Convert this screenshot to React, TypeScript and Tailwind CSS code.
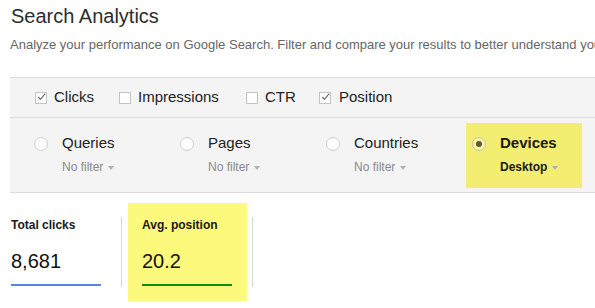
import React from "react";

function Check({ checked }: { checked: boolean }) {
  return (
    <span className="w-[12px] h-[12px] border border-[#c4c4c4] bg-white flex items-center justify-center shrink-0">
      {checked && (
        <svg width="11" height="10" viewBox="0 0 11 10" className="-mt-[1px] ml-[1px]">
          <polyline points="1.5,5 4.2,8 10,1" fill="none" stroke="#6a6a6a" strokeWidth="1.4" />
        </svg>
      )}
    </span>
  );
}

function Caret() {
  return <span className="ml-[5px] mt-[1px] w-0 h-0 border-l-[3.5px] border-r-[3.5px] border-t-[4px] border-l-transparent border-r-transparent border-t-[#b0b0b0]" />;
}

function Dimension({ label, filter, active }: { label: string; filter: string; active?: boolean }) {
  return (
    <div
      className={
        active
          ? "w-[116px] h-[65px] pl-[6px] pt-[11px] flex items-start bg-[#f3ed72]"
          : "w-[146px] h-[65px] pl-[6px] pt-[11px] flex items-start"
      }
    >
      <span
        className={
          active
            ? "mt-[3px] w-[14px] h-[14px] rounded-full border border-[#c9c48a] bg-[#f8f4b6] flex items-center justify-center shrink-0"
            : "mt-[3px] w-[14px] h-[14px] rounded-full border border-[#cfcfcf] bg-white shrink-0"
        }
      >
        {active && <span className="w-[6px] h-[6px] rounded-full bg-[#5e5b1c]" />}
      </span>
      <div className="ml-[14px]">
        <div className={active ? "text-[15px] leading-[18px] font-bold text-[#1a1a1a]" : "text-[15px] leading-[18px] text-[#222]"}>
          {label}
        </div>
        <div className="mt-[8px] flex items-center">
          <span className={active ? "text-[12px] leading-[14px] font-bold text-[#1a1a1a]" : "text-[12px] leading-[14px] text-[#8a8a8a]"}>
            {filter}
          </span>
          <Caret />
        </div>
      </div>
    </div>
  );
}

function Metric({ label, value, lineColor }: { label: string; value: string; lineColor: string }) {
  return (
    <div className="w-[90px] pt-[15px]">
      <div className="text-[12px] leading-[14px] font-bold text-[#1a1a1a] whitespace-nowrap">{label}</div>
      <div className="mt-[17px] text-[20px] leading-[24px] text-[#111]">{value}</div>
      <div className={`mt-[11px] h-[2px] ${lineColor}`} />
    </div>
  );
}

export default function App() {
  return (
    <div className="w-[595px] h-[308px] overflow-hidden bg-white font-['Liberation_Sans',Arial,sans-serif]">
      <div className="pl-[11px] pt-[4px] text-[20px] leading-[24px] text-[#2d2d2d]">Search Analytics</div>
      <div className="pl-[10px] mt-[9px] text-[13px] leading-[16px] text-[#666] whitespace-nowrap">
        Analyze your performance on Google Search. Filter and compare your results to better understand your search appearance.
      </div>

      <div className="ml-[10px] mt-[24px] bg-[#f4f4f4] border-t border-b border-[#dcdcdc]">
        <div className="h-[40px] border-b border-[#dcdcdc] pl-[25px] flex items-center text-[15px] text-[#222]">
          <div className="w-[84px] flex items-center gap-[7px]">
            <Check checked />
            <span>Clicks</span>
          </div>
          <div className="w-[127px] flex items-center gap-[7px]">
            <Check checked={false} />
            <span>Impressions</span>
          </div>
          <div className="w-[73px] flex items-center gap-[7px]">
            <Check checked={false} />
            <span>CTR</span>
          </div>
          <div className="flex items-center gap-[8px]">
            <Check checked />
            <span>Position</span>
          </div>
        </div>
        <div className="h-[74px] pt-[5px] pl-[18px] flex items-start">
          <Dimension label="Queries" filter="No filter" />
          <Dimension label="Pages" filter="No filter" />
          <Dimension label="Countries" filter="No filter" />
          <Dimension label="Devices" filter="Desktop" active />
        </div>
      </div>

      <div className="mt-[10px] pl-[11px] flex items-start">
        <Metric label="Total clicks" value="8,681" lineColor="bg-[#5189e0]" />
        <div className="ml-[20px] mt-[14px] w-px h-[70px] bg-[#d6d6d6]" />
        <div className="ml-[6px] w-[119px] h-[98px] pl-[14px] bg-[#fdf97c]">
          <Metric label="Avg. position" value="20.2" lineColor="bg-[#118c11]" />
        </div>
        <div className="ml-[5px] mt-[14px] w-px h-[70px] bg-[#d6d6d6]" />
      </div>
    </div>
  );
}
